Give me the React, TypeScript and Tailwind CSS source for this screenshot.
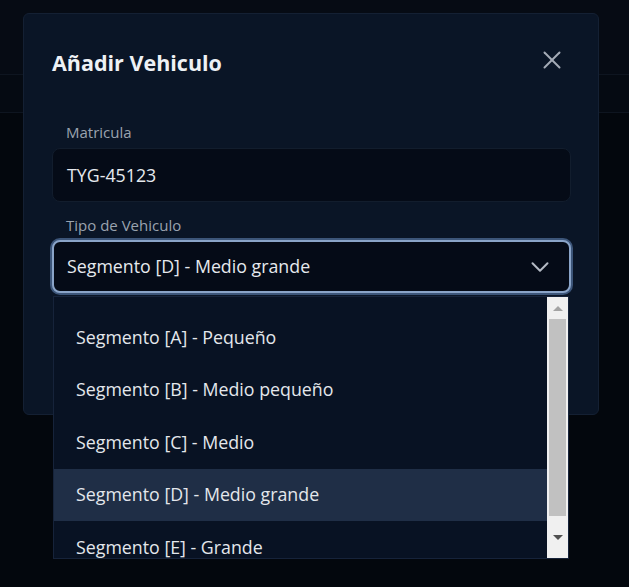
import { X, ChevronDown } from "lucide-react";

const options = [
  "Segmento [A] - Pequeño",
  "Segmento [B] - Medio pequeño",
  "Segmento [C] - Medio",
  "Segmento [D] - Medio grande",
  "Segmento [E] - Grande",
];

export default function App() {
  return (
    <div
      className="relative h-[587px] w-[629px] overflow-hidden bg-[#03070d]"
      style={{ fontFamily: '"Open Sans", "Noto Sans", sans-serif' }}
    >
      {/* page behind the dimmed overlay */}
      <div className="h-[75px] border-b border-[#0e1520] bg-[#060b14]" />
      <div className="h-[38px] border-b border-[#0e1520] bg-[#050a12]" />

      {/* modal */}
      <div className="absolute left-[23px] top-[13px] h-[402px] w-[576px] rounded-md border border-[#142033] bg-[#0a1526] px-[28px] pt-[34px]">
        <div className="flex h-[30px] items-center justify-between">
          <h2 className="text-[21.5px] font-bold leading-[30px] text-[#eef1f5]">Añadir Vehiculo</h2>
          <X className="mb-[6px] mr-[3px] h-[30px] w-[30px] text-[#a4abb6]" strokeWidth={1.6} />
        </div>

        <div className="mt-[44px]">
          <label className="block pl-[14px] text-[15px] leading-[20px] text-[#9aa3af]">Matricula</label>
          <div className="mt-[6px] flex h-[54px] w-[519px] items-center rounded-lg border border-[#121d2d] bg-[#050b17] px-[14px] text-[17.8px] text-[#e6e9ee]">
            TYG-45123
          </div>
        </div>

        <div className="mt-[13px]">
          <label className="block pl-[14px] text-[15px] leading-[20px] text-[#9aa3af]">Tipo de Vehiculo</label>
          <div className="mt-[5px] flex h-[53px] w-[519px] items-center justify-between rounded-lg border-2 border-[#8aa4c8] bg-[#050b17] pl-[13px] pr-[14px] text-[17.8px] text-[#e6e9ee] ring-2 ring-[#3c5579]">
            <span>Segmento [D] - Medio grande</span>
            <ChevronDown className="h-[30px] w-[30px] text-[#b4bac4]" strokeWidth={1.6} />
          </div>
        </div>
      </div>

      {/* native-looking option list */}
      <div className="absolute left-[53px] top-[296px] flex h-[263px] w-[516px] border border-[#16233a] bg-[#081223]">
        <div className="flex-1 overflow-hidden pt-[14px]">
          {options.map((o) => (
            <div
              key={o}
              className={
                "flex h-[52.5px] items-center pl-[22px] text-[17.8px] text-[#e4e7ec] " +
                (o.includes("[D]") ? "bg-[#1f2e46]" : "")
              }
            >
              {o}
            </div>
          ))}
        </div>
        <div className="flex w-[21px] flex-col items-center bg-[#f0f0f0]">
          <div className="flex h-[22px] items-center justify-center">
            <div className="h-0 w-0 border-x-[5px] border-b-[5px] border-x-transparent border-b-[#a3a3a3]" />
          </div>
          <div className="h-[197px] w-[17px] bg-[#c1c1c1]" />
          <div className="flex flex-1 items-center justify-center">
            <div className="h-0 w-0 border-x-[5px] border-t-[5px] border-x-transparent border-t-[#505050]" />
          </div>
        </div>
      </div>
    </div>
  );
}
